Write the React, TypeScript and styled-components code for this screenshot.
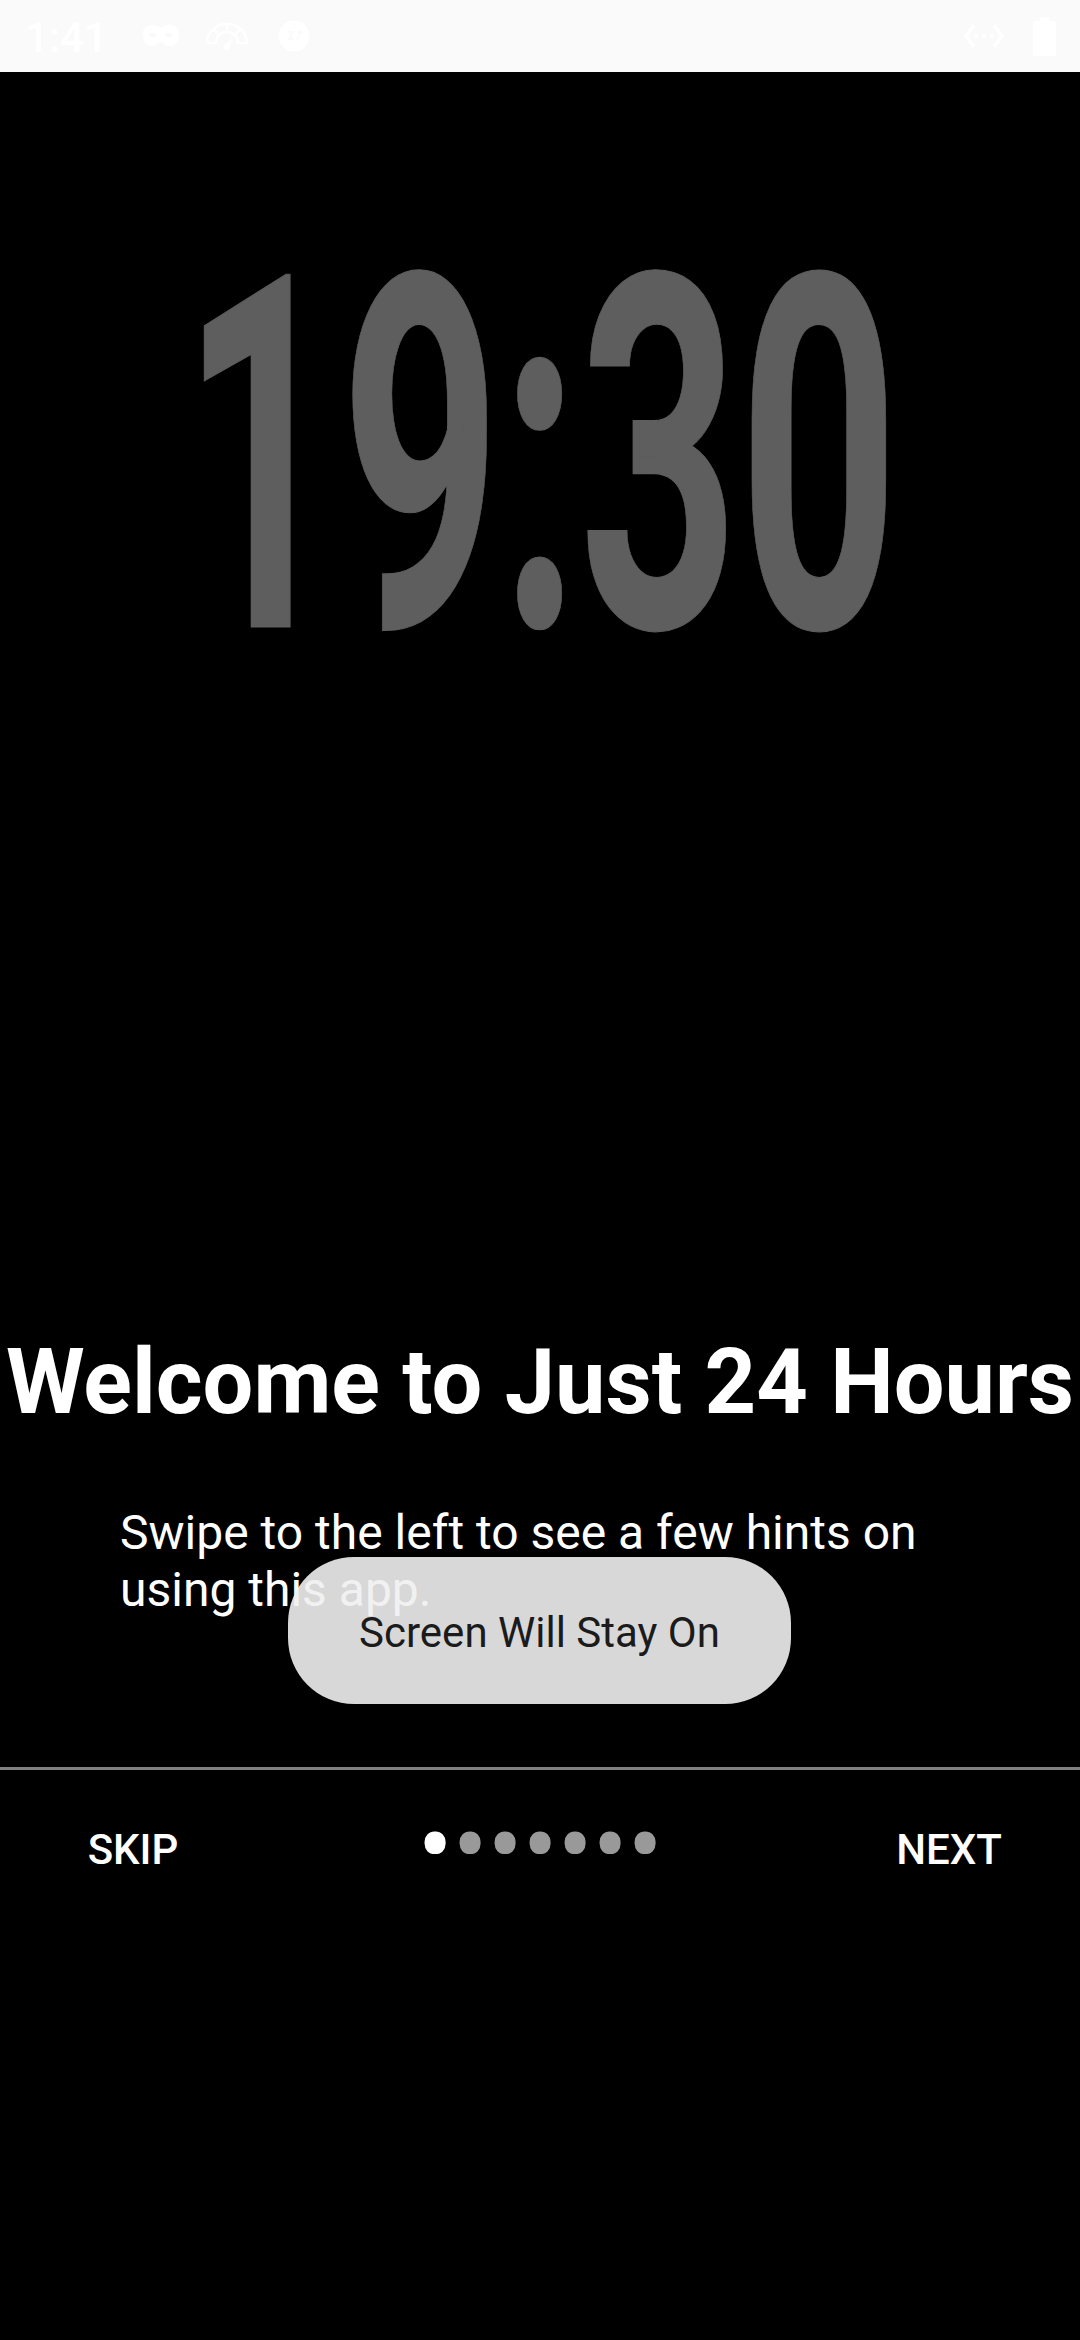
import React from "react";
import styled, { createGlobalStyle } from "styled-components";

const GlobalStyle = createGlobalStyle`
  * { box-sizing: border-box; }
  html, body { margin: 0; padding: 0; background: #000; }
`;

const Screen = styled.main`
  width: 1080px;
  height: 2340px;
  display: flex;
  flex-direction: column;
  position: relative;
  overflow: hidden;
  background: #000;
  color: #fff;
  font-family: Roboto, "Liberation Sans", sans-serif;
`;

const StatusBar = styled.header`
  height: 72px;
  flex: none;
  display: flex;
  align-items: center;
  justify-content: space-between;
  padding: 0 24px 0 25px;
  background: #fafafa;
  color: #fff;
`;

const StatusGroup = styled.div<{ $gap: number }>`
  display: flex;
  align-items: center;
  gap: ${(p) => p.$gap}px;
`;

const StatusTime = styled.span`
  width: 92px;
  font-size: 42px;
  line-height: 49px;
  font-weight: 500;
  white-space: nowrap;
  padding-top: 2px;
`;

const Preview = styled.section`
  height: 1258px;
  flex: none;
  display: flex;
  justify-content: center;
  align-items: flex-start;
  padding-top: 221px;
`;

const ClockFace = styled.div`
  font-size: 278.5px;
  line-height: 330px;
  font-weight: 700;
  color: #5e5e5e;
  -webkit-text-stroke: 0.6px #5e5e5e;
  white-space: nowrap;
  transform: scaleY(1.779);
`;

const Title = styled.h1`
  margin: 0;
  height: 105px;
  flex: none;
  font-size: 90px;
  line-height: 105px;
  font-weight: 700;
  text-align: center;
  white-space: nowrap;
`;

const Hint = styled.p`
  margin: 69px 120px 0;
  height: 263px;
  flex: none;
  font-size: 48px;
  line-height: 57px;
`;

const Footer = styled.footer`
  height: 141px;
  flex: none;
  display: grid;
  grid-template-columns: 264px 1fr 264px;
  align-items: start;
  border-top: 3px solid #808080;
`;

const NavButton = styled.button`
  height: 138px;
  margin: 0;
  padding: 20px 0 0 2px;
  border: 0;
  background: none;
  color: #fff;
  font: 500 42px/49px Roboto, "Liberation Sans", sans-serif;
  text-align: center;
`;

const Dots = styled.div`
  display: flex;
  justify-content: center;
  padding-top: 15px;
  font-size: 105px;
  line-height: 123px;
`;

const Dot = styled.span<{ $active: boolean }>`
  width: 35px;
  color: ${(p) => (p.$active ? "#fff" : "#999")};
`;

const Toast = styled.div`
  position: absolute;
  left: 288px;
  top: 1557px;
  width: 503px;
  height: 147px;
  display: flex;
  align-items: center;
  justify-content: center;
  padding-top: 4px;
  border-radius: 66px;
  background: rgba(239, 239, 239, 0.9);
  color: #1b1b1b;
  font-size: 42px;
  line-height: 49px;
  white-space: nowrap;
`;

const FaceSlot = styled.span`
  display: flex;
  margin-left: 4px;
`;

const MaskIcon = () => (
  <svg width="38" height="24" viewBox="0 0 38 24" fill="#fff" fillRule="evenodd">
    <path d="M10 1C15 1 16 3 19 3S23 1 28 1C34 1 38 5 37 12C36 19 32 22 28 22C23 22 22 18 19 18S15 22 10 22C6 22 2 19 1 12C0 5 4 1 10 1ZM7 11C9 8 13 8 15 11C13 15 9 15 7 11ZM23 11C25 8 29 8 31 11C29 15 25 15 23 11Z" />
  </svg>
);

const GaugeIcon = () => (
  <svg width="44" height="30" viewBox="0 0 44 30" fill="none" stroke="#fff" strokeWidth="2.500">
    <path d="M2 22C2 11 11 3 22 3S42 11 42 22H33C33 15 28 11 22 11S11 15 11 22H2M22 3V11M9 8L14 14M35 8L30 14" />
    <path d="M27 17L19 24A3.200 3.200 0 1 0 25 27Z" fill="#fff" stroke="none" />
  </svg>
);

const FaceIcon = () => (
  <svg width="32" height="32" viewBox="0 0 32 32">
    <circle cx="16" cy="16" r="15.5" fill="#fff" />
    <path d="M10 12H15L11 19H16M19 12H23L19 20" fill="none" stroke="#fafafa" strokeWidth="1.8" />
  </svg>
);

const DataIcon = () => (
  <svg width="42" height="26" viewBox="0 0 42 26" fill="none" stroke="#fff" strokeWidth="4">
    <path d="M11 2L3 13L11 24M31 2L39 13L31 24" />
    <path d="M12 13H15M19.500 13H22.500M27 13H30" />
  </svg>
);

const BatteryIcon = () => (
  <svg width="23" height="39" viewBox="0 0 23 39">
    <path d="M7 0H16V4H21Q23 4 23 6V37Q23 39 21 39H2Q0 39 0 37V6Q0 4 2 4H7Z" fill="#fff" />
  </svg>
);

const pages = [0, 1, 2, 3, 4, 5, 6];

export default function App() {
  return (
    <Screen>
      <GlobalStyle />
      <StatusBar>
        <StatusGroup $gap={25}>
          <StatusTime>1:41</StatusTime>
          <MaskIcon />
          <GaugeIcon />
          <FaceSlot>
            <FaceIcon />
          </FaceSlot>
        </StatusGroup>
        <StatusGroup $gap={28}>
          <DataIcon />
          <BatteryIcon />
        </StatusGroup>
      </StatusBar>
      <Preview>
        <ClockFace>19:30</ClockFace>
      </Preview>
      <Title>Welcome to Just 24 Hours</Title>
      <Hint>
        Swipe to the left to see a few hints on
        <br />
        using this app.
      </Hint>
      <Footer>
        <NavButton>SKIP</NavButton>
        <Dots>
          {pages.map((page) => (
            <Dot key={page} $active={page === 0}>•</Dot>
          ))}
        </Dots>
        <NavButton>NEXT</NavButton>
      </Footer>
      <Toast>Screen Will Stay On</Toast>
    </Screen>
  );
}
